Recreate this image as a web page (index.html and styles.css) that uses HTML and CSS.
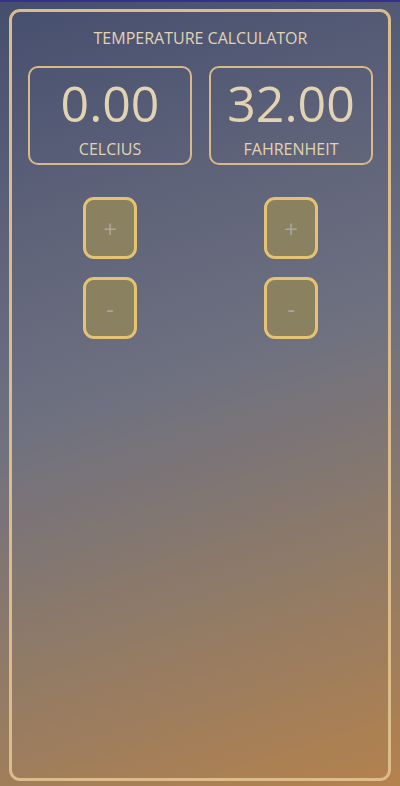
FILE: index.html
```html
<html>
  <head>
    <title>Temperature Calculator</title>
    <link rel="stylesheet" href="styles.css">
  </head>
  <body>
    <div class="frame">
      <h1>TEMPERATURE CALCULATOR</h1>
      <div class="columns">
        <div class="column">
          <div class="display">
            <div class="value" id="celcius">0.00</div>
            <div class="unit">CELCIUS</div>
          </div>
          <button class="step">+</button>
          <button class="step">-</button>
        </div>
        <div class="column">
          <div class="display">
            <div class="value" id="fahrenheit">32.00</div>
            <div class="unit">FAHRENHEIT</div>
          </div>
          <button class="step">+</button>
          <button class="step">-</button>
        </div>
      </div>
    </div>
  </body>
</html>
```

FILE: styles.css
```css
html,
body {
  height: 100%;
}

body {
  margin: 0;
  box-sizing: border-box;
  border-top: 2px solid #36308a;
  padding: 7px 9px 5px 9px;
  font-family: "Open Sans", "Noto Sans", sans-serif;
  color: #e2d3b2;
  background: linear-gradient(162deg, #454e6e 0%, #5d6279 25%, #6f7180 48%, #8e7a68 72%, #b4824d 100%);
}

.frame {
  box-sizing: border-box;
  height: 100%;
  border: 3px solid #dcbc8a;
  border-radius: 11px;
  padding: 0 15px 0 16px;
}

h1 {
  margin: 14px 0 0 0;
  text-align: center;
  font-size: 16px;
  font-weight: normal;
  line-height: 24px;
}

.columns {
  display: flex;
  gap: 17px;
  margin-top: 16px;
}

.column {
  flex: 1;
  display: flex;
  flex-direction: column;
  align-items: center;
}

.display {
  box-sizing: border-box;
  width: 100%;
  height: 99px;
  border: 2px solid #d8b98a;
  border-radius: 10px;
  padding-top: 5px;
  text-align: center;
}

.value {
  font-size: 50px;
  line-height: 60px;
}

.unit {
  font-size: 16px;
  line-height: 20px;
  margin-top: 6px;
}

.step {
  box-sizing: border-box;
  width: 54px;
  height: 62px;
  margin-top: 32px;
  border: 3px solid #e4c372;
  border-radius: 11px;
  background: #8a8160;
  color: #a8a59c;
  font-family: "Open Sans", sans-serif;
  font-size: 24px;
  padding: 0;
}

.step + .step {
  margin-top: 18px;
}
```
